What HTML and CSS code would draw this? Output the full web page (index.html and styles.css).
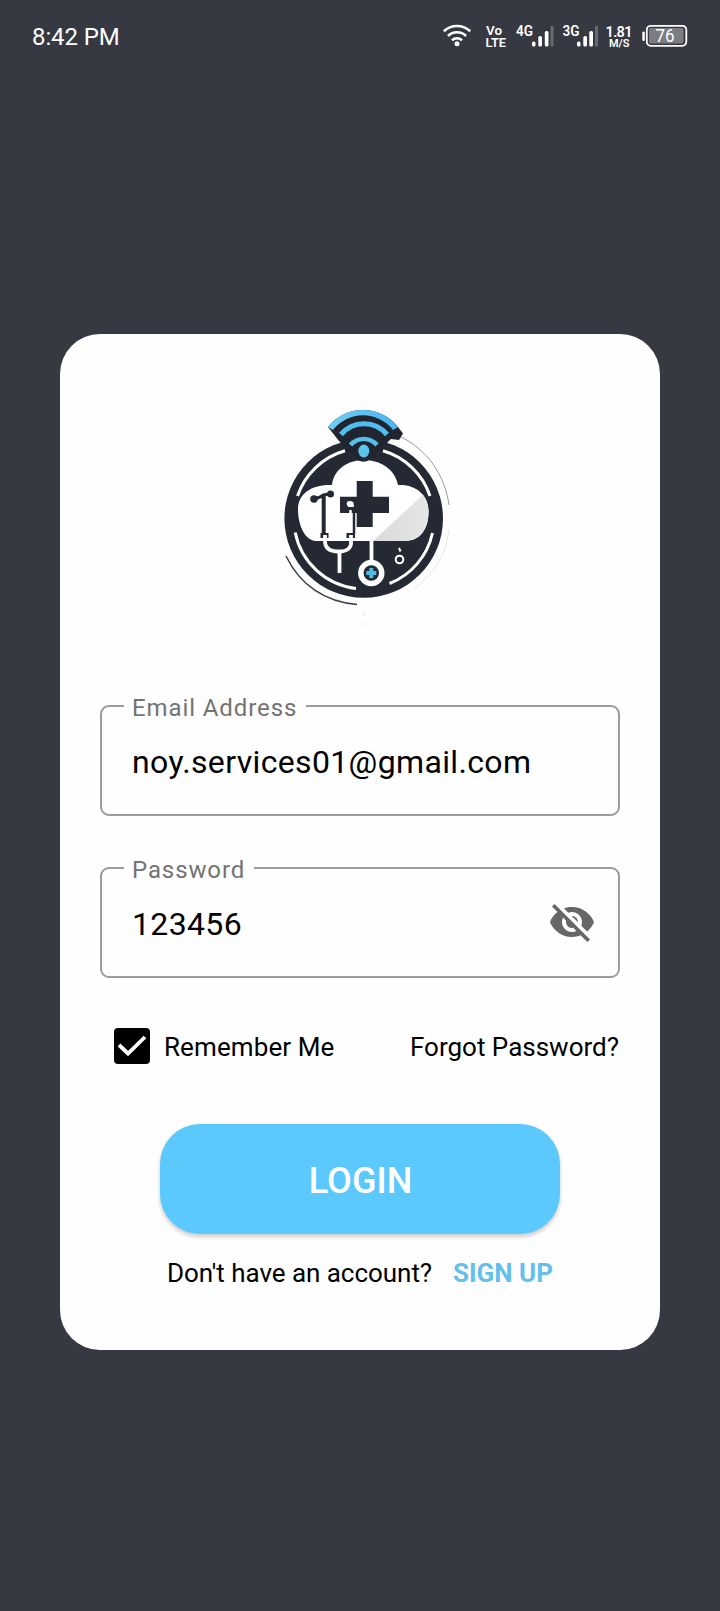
FILE: index.html
```html
<!DOCTYPE html>
<html lang="en">
<head>
<meta charset="utf-8">
<title>Login</title>
<link rel="stylesheet" href="styles.css">
</head>
<body>
<header class="status">
  <span class="time">8:42 PM</span>
  <svg class="status-icons" width="250" height="30" viewBox="440 20 250 30">
    <g fill="none" stroke="#fff" stroke-width="2.600">
      <path d="M443.800 31.300a19 19 0 0 1 26.400 0"/>
      <path d="M448 36a12.800 12.800 0 0 1 18 0"/>
      <path d="M452 40.300a7 7 0 0 1 10 0"/>
    </g>
    <circle cx="457" cy="43.800" r="2.500" fill="#fff"/>
    <g class="status-text">
      <text x="486" y="34.700" font-size="13.500" textLength="16" lengthAdjust="spacingAndGlyphs">Vo</text>
      <text x="485.500" y="46.800" font-size="13.500" textLength="20.500" lengthAdjust="spacingAndGlyphs">LTE</text>
      <text x="516" y="36" font-size="14" textLength="17" lengthAdjust="spacingAndGlyphs">4G</text>
      <text x="562.500" y="36" font-size="14" textLength="17" lengthAdjust="spacingAndGlyphs">3G</text>
      <text x="605.500" y="37" font-size="14.500" textLength="27">1.81</text>
      <text x="609" y="47" font-size="11" textLength="20.500" lengthAdjust="spacingAndGlyphs">M/S</text>
    </g>
    <g fill="#fff">
      <rect x="532" y="41.500" width="3.500" height="5" rx="1.500"/>
      <rect x="538.300" y="36" width="3.700" height="10.500" rx="1.500"/>
      <rect x="544.800" y="31" width="3.700" height="15.500" rx="1.500"/>
      <rect x="550.500" y="26" width="3" height="20.500" rx="1" opacity=".25"/>
      <rect x="577" y="41.500" width="3.500" height="5" rx="1.500"/>
      <rect x="583.300" y="36" width="3.700" height="10.500" rx="1.500"/>
      <rect x="589.300" y="31" width="3.700" height="15.500" rx="1.500"/>
      <rect x="595" y="26" width="3" height="20.500" rx="1" opacity=".25"/>
      <rect x="642.300" y="31.500" width="2.500" height="9.500" rx="1.200"/>
      <rect x="649" y="28" width="34.500" height="15.500" rx="1.500" opacity=".35"/>
    </g>
    <rect x="646.800" y="25.800" width="39.500" height="20" rx="4" fill="none" stroke="#fff" stroke-width="1.800"/>
    <text class="battery" x="655.500" y="42.200" font-size="17.500" textLength="19" lengthAdjust="spacingAndGlyphs">76</text>
  </svg>
</header>
<main class="card">
  <svg class="logo" width="190" height="230" viewBox="270 400 190 230">
    <defs>
      <clipPath id="cloud"><path d="M316 541C304 540 298 524 298 509C298 493 313 484 332 485C334 469 348 460 364 460S395 469 398 485C416 484 428 495 428.500 510C429 528 421 541 405 541Z"/></clipPath>
      <linearGradient id="blue" x1="0" x2="1"><stop offset="0" stop-color="#70d0f4"/><stop offset="1" stop-color="#48b4f0"/></linearGradient>
      <linearGradient id="shade" x1="0" x2="1"><stop offset="0" stop-color="#d9d9da"/><stop offset="1" stop-color="#e9e9ea"/></linearGradient>
    </defs>
    <path d="M286 556C300 585 325 602 357 604.500" fill="none" stroke="#3c3f49" stroke-width="1.500"/>
    <path d="M399 436C427 449 445 475 449 505" fill="none" stroke="#8b8e94" stroke-width=".9"/>
    <path d="M449 530C446 556 432 576 415 588" fill="none" stroke="#dedee1" stroke-width=".7"/>
    <circle cx="363.700" cy="518.500" r="79.300" fill="#252934"/>
    <g fill="none" stroke="#fff" stroke-width="3">
      <path d="M297.500 496A70.500 70.500 0 0 1 345 450.800"/>
      <path d="M383 450.800A70.500 70.500 0 0 1 430 496"/>
      <path d="M295.200 532.500A70.500 70.500 0 0 0 356 588.500"/>
      <path d="M389.500 583.500A70.500 70.500 0 0 0 432.500 533"/>
    </g>
    <path d="M395 438.500C407 443 416 450 423 457" fill="none" stroke="#fff" stroke-width="5"/>
    <g clip-path="url(#cloud)">
      <rect x="290" y="450" width="150" height="100" fill="#fff"/>
      <path d="M373 541L427 491L440 545Z" fill="url(#shade)"/>
    </g>
    <path d="M328 427A44.500 44.500 0 0 1 398 427L403 433.500L399 440L391 439L372 457Q363 466 354 457L339 441Z" fill="#20252f"/>
    <path d="M328 427A44.500 44.500 0 0 1 398 427L393 430A38 38 0 0 0 333 430Z" fill="url(#blue)"/>
    <path d="M341 434.500A30 30 0 0 1 387 434.500" fill="none" stroke="#52bdf0" stroke-width="5.200"/>
    <path d="M350.500 445A17.500 17.500 0 0 1 377 445" fill="none" stroke="#57bde9" stroke-width="4.500"/>
    <circle cx="364" cy="451.500" r="10" fill="#20252f"/>
    <ellipse cx="363.800" cy="451" rx="5.500" ry="6.500" fill="#5bc4ec"/>
    <path d="M356.700 481H372.700V496.700H389V513H372.700V527H356.700V513H340V496.700H356.700Z" fill="#252934"/>
    <g fill="none" stroke="#252934">
      <path d="M314 498.500Q320 498 323.500 495L332 493.500" stroke-width="3"/>
      <path d="M323.700 496V536" stroke-width="4"/>
      <path d="M354 508V534" stroke-width="2.500"/>
      <path d="M320.500 535.500H328.500M346.500 535.500H355" stroke-width="5"/>
    </g>
    <circle cx="314" cy="499" r="3.800" fill="#252934"/>
    <circle cx="330.500" cy="494" r="3.500" fill="#252934"/>
    <path d="M347 502Q350 500 353.500 502.500L354 507H348.500Q346 505 347 502ZM340 513H349V526H340Z" fill="#fff"/>
    <path d="M350.500 510V532" stroke="#fff" stroke-width="2.500"/>
    <g fill="none" stroke="#fff" stroke-width="3.800">
      <path d="M325 535V541Q325 551.500 338.500 551.500T351 541V535"/>
      <path d="M339.500 551V573"/>
      <path d="M371.500 540V562"/>
    </g>
    <circle cx="371.300" cy="573" r="13.200" fill="#fff"/>
    <circle cx="371.300" cy="573" r="7.800" fill="#252934"/>
    <path d="M371.300 568V578M366.300 573H376.300" stroke="#4cbde5" stroke-width="4"/>
    <circle cx="399.500" cy="559.500" r="3.800" fill="none" stroke="#fff" stroke-width="2"/>
    <path d="M399 548L400.500 551.500" stroke="#fff" stroke-width="2"/>
    <path d="M364 613V616M365 623V625" stroke="#dcdce0"/>
  </svg>

  <fieldset class="field">
    <legend>Email Address</legend>
    <span class="value">noy.services01@gmail.com</span>
  </fieldset>
  <fieldset class="field field-password">
    <legend>Password</legend>
    <span class="value">123456</span>
    <svg class="eye" width="48" height="48" viewBox="0 0 24 24"><path d="M12 7c2.760 0 5 2.240 5 5 0 .650-.130 1.260-.360 1.830l2.920 2.920c1.510-1.260 2.700-2.890 3.430-4.750-1.730-4.390-6-7.500-11-7.500-1.400 0-2.740.250-3.980.700l2.160 2.160C10.740 7.130 11.350 7 12 7zM2 4.270l2.280 2.280.460.460C3.080 8.300 1.780 10.020 1 12c1.730 4.390 6 7.500 11 7.500 1.550 0 3.030-.300 4.380-.840l.420.420L19.730 22 21 20.730 3.270 3 2 4.270zM7.530 9.800l1.550 1.550c-.050.210-.080.430-.080.650 0 1.660 1.340 3 3 3 .220 0 .440-.030.650-.080l1.550 1.550c-.670.330-1.410.530-2.200.530-2.760 0-5-2.240-5-5 0-.790.200-1.530.530-2.200zm4.310-.780l3.150 3.150.020-.160c0-1.660-1.340-3-3-3l-.170.010z" fill="#666"/></svg>
  </fieldset>

  <div class="options">
    <span class="checkbox"><svg width="36" height="36" viewBox="0 0 36 36"><path d="M5 17L14 25.500L31 9" fill="none" stroke="#fff" stroke-width="3.800"/></svg></span>
    <span class="remember">Remember Me</span>
    <a class="forgot">Forgot Password?</a>
  </div>
  <button class="login">LOGIN</button>
  <div class="signup"><span class="question">Don't have an account?</span><a class="signup-link">SIGN UP</a></div>
</main>
</body>
</html>
```
FILE: styles.css
```css
* { box-sizing: border-box; }
body {
  margin: 0;
  height: 1611px;
  background: #363842;
  font-family: Roboto, sans-serif;
  color: #000;
  overflow: hidden;
}
.status {
  display: flex;
  justify-content: space-between;
  height: 334px;
  padding: 20px 30px 0 32px;
}
.time { color: #fff; font-size: 24px; line-height: 34px; letter-spacing: -0.1px; white-space: nowrap; }
.status-icons { display: block; }
.status-text { fill: #fff; font-weight: 600; }
.battery { fill: #fff; font-weight: 400; }
.card {
  width: 600px;
  height: 1016px;
  margin: 0 60px;
  padding: 66px 40px 0;
  background: #fefefe;
  border-radius: 40px;
  display: flex;
  flex-direction: column;
}
.logo { display: block; margin-left: 170px; flex: none; }
.field {
  width: 520px;
  height: 124px;
  margin: 62px 0 0;
  padding: 0 22px;
  border: 2px solid #9b9b9b;
  border-radius: 9px;
  min-width: 0;
  display: flex;
  align-items: flex-start;
  justify-content: space-between;
  flex: none;
}
.field legend {
  height: 28px;
  padding: 0 9px 0 8px;
  font-size: 24px;
  line-height: 33px;
  letter-spacing: 0.9px;
  color: #737373;
  white-space: nowrap;
}
.field-password { margin-top: 38px; }
.value {
  padding: 23px 0 0 8px;
  font-size: 32px;
  line-height: 38px;
  letter-spacing: 0.35px;
}
.eye { margin-top: 16px; }
.options { display: flex; align-items: center; height: 36px; margin: 50px 0 0 14px; font-size: 26px; flex: none; white-space: nowrap; }
.checkbox { width: 36px; height: 36px; background: #000; border-radius: 4px; }
.checkbox svg { display: block; }
.remember { margin-left: 14px; padding-top: 2px; line-height: 38px; letter-spacing: 0.1px; }
.forgot { margin: 0 1px 0 auto; padding-top: 2px; line-height: 38px; }
.login {
  width: 400px;
  height: 110px;
  margin: 60px 0 0 60px;
  padding: 4px 0 0 1px;
  border: 0;
  border-radius: 40px;
  background: #5cc9fc;
  color: #fff;
  font: 500 36px/42px Roboto, sans-serif;
  box-shadow: 0 3px 4px rgba(0, 0, 0, .2);
  flex: none;
}
.signup { display: flex; justify-content: space-between; margin: 23px 67px 0; font-size: 26px; line-height: 32px; white-space: nowrap; }
.question { letter-spacing: -0.04px; }
.signup-link { color: #64bfec; font-weight: 700; }
```
